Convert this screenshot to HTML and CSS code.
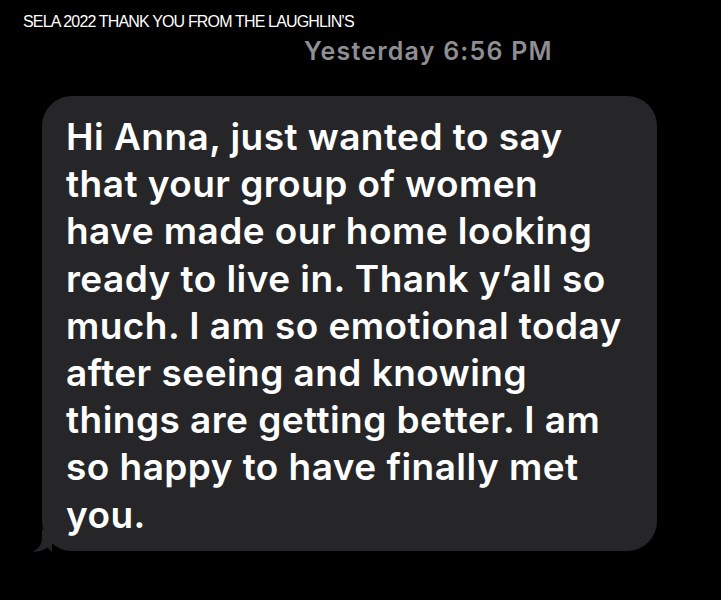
FILE: index.html
```html
<!DOCTYPE html>
<html>
<head>
<meta charset="utf-8">
<link rel="stylesheet" href="styles.css">
</head>
<body>
<div class="page">
  <div class="title">SELA 2022 THANK YOU FROM THE LAUGHLIN’S</div>
  <div class="stamp">Yesterday 6:56 PM</div>
  <div class="bubble">
    <p class="msg">Hi Anna, just wanted to say<br>that your group of women<br>have made our home looking<br>ready to live in. Thank y’all so<br>much. I am so emotional today<br>after seeing and knowing<br>things are getting better. I am<br>so happy to have finally met<br>you.</p>
    <svg class="tail" width="20" height="22" viewBox="0 0 20 22"><path d="M10 0 L10 8 C10 15 6 19.5 0 21.5 C6 22.2 11.5 20.5 15.5 17.5 C17.5 19.5 19 21 20 22 L20 0 Z" fill="#262629"/></svg>
  </div>
</div>
</body>
</html>
```
FILE: styles.css
```css
html, body { margin: 0; padding: 0; background: #000; }
.page { width: 721px; height: 600px; background: #000; overflow: hidden; }
.title {
  font-family: "Liberation Sans", Arial, sans-serif;
  font-size: 16px;
  color: #fff;
  padding: 13px 0 0 23px;
  line-height: 18px;
  height: 18px;
  letter-spacing: -0.84px;
}
.stamp {
  font-family: Inter, "Liberation Sans", sans-serif;
  font-weight: 600;
  font-size: 25px;
  color: #8e8e93;
  padding: 7px 0 0 304px;
  line-height: 26px;
  height: 26px;
  letter-spacing: 1.2px;
}
.bubble {
  position: relative;
  margin: 32px 0 0 42px;
  width: 615px;
  height: 455px;
  box-sizing: border-box;
  background: #262629;
  border-radius: 30px;
  padding: 17px 0 0 24px;
}
.msg {
  margin: 0;
  font-family: Inter, "Liberation Sans", sans-serif;
  font-weight: 600;
  font-size: 37px;
  line-height: 47.2px;
  color: #fff;
  letter-spacing: 0.45px;
}
.tail { position: absolute; left: -10px; bottom: -1px; }
```
